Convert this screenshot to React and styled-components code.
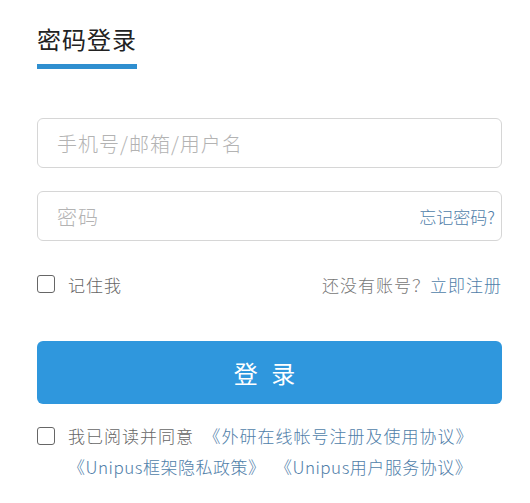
import styled, { createGlobalStyle } from 'styled-components';

const GlobalStyle = createGlobalStyle`
    body {
        margin: 0;
        background: #fff;
        font-family: "Noto Sans CJK SC", "Noto Sans", sans-serif;
        font-weight: 300;
    }
`;

const Page = styled.div`
    width: 465px;
    padding: 23px 0 0 37px;
`;

const Title = styled.h2`
    display: inline-block;
    margin: 0;
    font-size: 24px;
    font-weight: 400;
    line-height: 32px;
    color: #222;
    letter-spacing: 1px;
    padding-bottom: 9px;
    border-bottom: 5px solid #2f8fd0;
`;

const Form = styled.form`
    display: flex;
    flex-direction: column;
    margin-top: 49px;
`;

const Field = styled.div`
    display: flex;
    align-items: center;
    height: 50px;
    box-sizing: border-box;
    border: 1px solid #d6d6d6;
    border-radius: 6px;
    padding: 0 6px 0 19px;
    margin-top: ${props => props.first ? 0 : '23px'};
`;

const Input = styled.input`
    flex: 1;
    min-width: 0;
    border: none;
    outline: none;
    background: transparent;
    font-family: inherit;
    font-weight: 300;
    font-size: 20px;
    letter-spacing: 1px;
    color: #333;
    padding: 0;

    &::placeholder {
        color: #b3b3b3;
    }
`;

const Link = styled.a`
    color: #4f7ea9;
    text-decoration: none;
    font-size: 17px;
    letter-spacing: ${props => props.tight ? '0.5px' : 'inherit'};
    cursor: pointer;
`;

const Row = styled.div`
    display: flex;
    align-items: center;
    justify-content: space-between;
    height: 24px;
    margin-top: 31px;
    font-size: 17px;
    letter-spacing: 1px;
    color: #777;
`;

const CheckLabel = styled.label`
    display: flex;
    align-items: center;
    gap: 13px;
    color: #666;
`;

const Box = styled.span`
    width: 18px;
    height: 18px;
    box-sizing: border-box;
    border: 1.5px solid #666;
    border-radius: 3px;
    flex-shrink: 0;
`;

const Button = styled.button`
    margin-top: 45px;
    height: 63px;
    border: none;
    border-radius: 6px;
    background: #2f97dd;
    color: #fff;
    font-family: inherit;
    font-weight: 400;
    font-size: 24px;
    letter-spacing: 4px;
    padding-right: 12px;
    cursor: pointer;
`;

const Agreement = styled.div`
    display: flex;
    align-items: flex-start;
    gap: 13px;
    margin-top: 16px;
`;

const AgreeBox = styled(Box)`
    margin-top: 7px;
`;

const AgreeText = styled.p`
    margin: 0;
    font-size: 17px;
    line-height: 31px;
    letter-spacing: 1px;
    color: #666;
`;

const App = () => {
    return (
        <Page>
            <GlobalStyle />
            <Title>密码登录</Title>
            <Form onSubmit={e => e.preventDefault()}>
                <Field first>
                    <Input placeholder="手机号/邮箱/用户名" />
                </Field>
                <Field>
                    <Input type="password" placeholder="密码" />
                    <Link>忘记密码?</Link>
                </Field>
                <Row>
                    <CheckLabel><Box />记住我</CheckLabel>
                    <span>还没有账号？<Link>立即注册</Link></span>
                </Row>
                <Button type="submit">登 录</Button>
                <Agreement>
                    <AgreeBox />
                    <AgreeText>
                        我已阅读并同意&nbsp; <Link>《外研在线帐号注册及使用协议》</Link>{' '}
                        <Link tight>《Unipus框架隐私政策》</Link>&nbsp; <Link tight>《Unipus用户服务协议》</Link>
                    </AgreeText>
                </Agreement>
            </Form>
        </Page>
    );
};

export default App;
